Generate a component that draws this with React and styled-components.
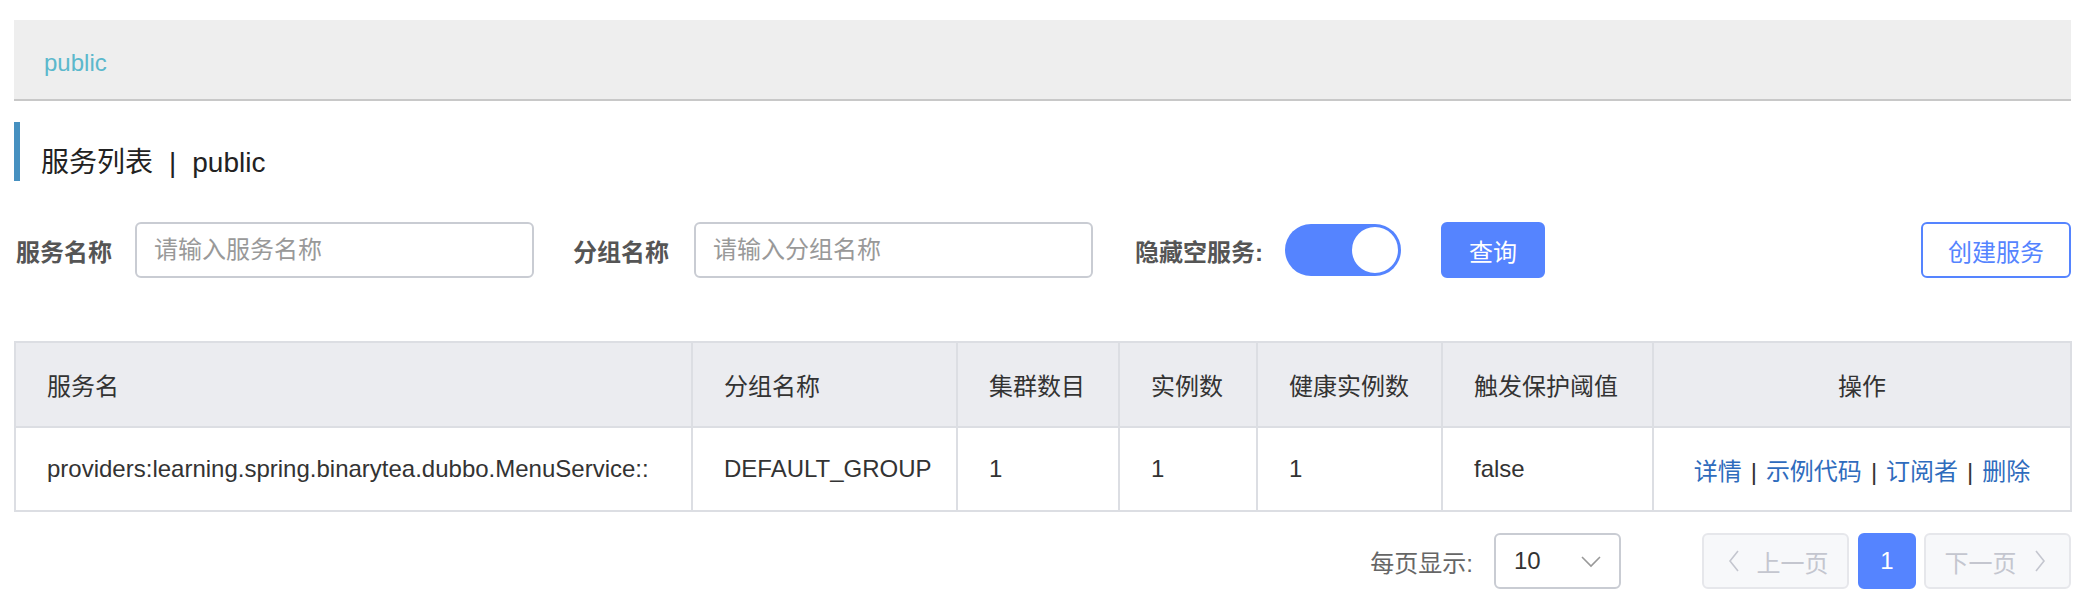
import React from 'react';
import styled, { createGlobalStyle } from 'styled-components';

const GlobalStyle = createGlobalStyle`
  body {
    margin: 0;
    background: #fff;
    font-family: "Liberation Sans", "Noto Sans CJK SC", sans-serif;
    color: #333;
  }
`;

const Page = styled.div`
  padding: 20px 15px 0 14px;
`;

const Crumb = styled.div`
  height: 81px;
  background: #eeeeee;
  border-bottom: 2px solid #c8c8c8;
  display: flex;
  align-items: center;
  padding: 6px 0 0 30px;
  box-sizing: border-box;
  font-size: 24px;
  color: #5bb8cc;
`;

const Title = styled.h3`
  margin: 21px 0 0;
  border-left: 6px solid #4690c0;
  padding: 27px 0 4px 21px;
  font-size: 28px;
  line-height: 28px;
  font-weight: normal;
  color: #222;
  display: flex;
`;

const Sep = styled.span`
  margin: 0 16px;
`;

const FilterRow = styled.div`
  margin-top: 41px;
  display: flex;
  align-items: center;
  height: 56px;
`;

const Label = styled.span`
  font-size: 24px;
  font-weight: bold;
  color: #555;
  margin: 0 ${p => p.gap || 23}px 0 ${p => p.left || 0}px;
  white-space: nowrap;
`;

const Input = styled.input`
  width: 399px;
  height: 56px;
  box-sizing: border-box;
  border: 2px solid #c9ccd3;
  border-radius: 6px;
  padding: 0 17px;
  font-size: 24px;
  font-family: inherit;
  color: #333;
  outline: none;
  &::placeholder {
    color: #999;
  }
`;

const Switch = styled.div`
  width: 116px;
  height: 52px;
  border-radius: 26px;
  background: #5584ff;
  box-sizing: border-box;
  display: flex;
  justify-content: flex-end;
  align-items: center;
  padding: 1px;
`;

const Knob = styled.div`
  width: 50px;
  height: 50px;
  border-radius: 50%;
  background: #fff;
  box-sizing: border-box;
  border: 2px solid #5584ff;
`;

const Button = styled.button`
  height: 56px;
  box-sizing: border-box;
  border-radius: 6px;
  font-size: 24px;
  font-family: inherit;
  padding: 0 ${p => p.pad || 26}px;
  border: 2px solid #5584ff;
  background: ${p => (p.primary ? '#5584ff' : '#fff')};
  color: ${p => (p.primary ? '#fff' : '#5584ff')};
  margin-left: ${p => p.left || 0}px;
  cursor: pointer;
`;

const Spacer = styled.div`
  flex: 1;
`;

const Table = styled.table`
  margin-top: 63px;
  width: 100%;
  border-collapse: collapse;
  table-layout: fixed;
  border: 2px solid #dcdee3;
`;

const Th = styled.th`
  height: 83px;
  background: #ebecf0;
  border: 2px solid #dcdee3;
  padding: 0 31px;
  text-align: ${p => p.align || 'left'};
  font-weight: normal;
  font-size: 24px;
  color: #333;
`;

const Td = styled.td`
  height: 82px;
  border: 2px solid #dcdee3;
  padding: 0 31px;
  text-align: ${p => p.align || 'left'};
  font-size: 24px;
  color: #333;
  white-space: nowrap;
`;

const Link = styled.a`
  color: #2f6cbd;
  text-decoration: none;
`;

const Bar = styled.span`
  margin: 0 9px;
  color: #333;
`;

const Pager = styled.div`
  margin-top: 21px;
  display: flex;
  justify-content: flex-end;
  align-items: center;
`;

const PageLabel = styled.span`
  font-size: 24px;
  color: #666;
  margin-right: 21px;
`;

const Select = styled.div`
  width: 127px;
  height: 56px;
  box-sizing: border-box;
  border: 2px solid #c9ccd3;
  border-radius: 6px;
  display: flex;
  align-items: center;
  justify-content: space-between;
  padding: 0 16px 0 18px;
  font-size: 24px;
  color: #333;
  margin-right: 81px;
`;

const PageBtn = styled.div`
  height: 56px;
  box-sizing: border-box;
  width: ${p => p.w}px;
  margin-left: ${p => p.left || 0}px;
  border-radius: 6px;
  border: 2px solid ${p => (p.active ? '#5584ff' : '#e6e7eb')};
  background: ${p => (p.active ? '#5584ff' : '#f7f8fa')};
  color: ${p => (p.active ? '#fff' : '#c4c6cf')};
  font-size: 24px;
  display: flex;
  align-items: center;
  justify-content: center;
  gap: 10px;
`;

const Chevron = ({ dir, color = '#c4c6cf', size = 24 }) => {
  const d = {
    left: 'M15 2 L7 12 L15 22',
    right: 'M9 2 L17 12 L9 22',
    down: 'M3 8 L12 17 L21 8',
  }[dir];
  return (
    <svg width={size} height={size} viewBox="0 0 24 24" fill="none">
      <path d={d} stroke={color} strokeWidth="1.6" />
    </svg>
  );
};

const columns = [
  { name: '服务名', w: 677 },
  { name: '分组名称', w: 265 },
  { name: '集群数目', w: 162 },
  { name: '实例数', w: 138 },
  { name: '健康实例数', w: 185 },
  { name: '触发保护阈值', w: 211 },
  { name: '操作', w: 418, align: 'center' },
];

const row = [
  'providers:learning.spring.binarytea.dubbo.MenuService::',
  'DEFAULT_GROUP',
  '1',
  '1',
  '1',
  'false',
];

const actions = ['详情', '示例代码', '订阅者', '删除'];

const App = () => {
  return (
    <Page>
      <GlobalStyle />
      <Crumb>public</Crumb>
      <Title>
        <span>服务列表</span>
        <Sep>|</Sep>
        <span>public</span>
      </Title>
      <FilterRow>
        <Label left={2}>服务名称</Label>
        <Input placeholder="请输入服务名称" />
        <Label left={39} gap={25}>分组名称</Label>
        <Input placeholder="请输入分组名称" />
        <Label left={42} gap={22}>隐藏空服务:</Label>
        <Switch>
          <Knob />
        </Switch>
        <Button primary left={40} pad={26}>查询</Button>
        <Spacer />
        <Button pad={25}>创建服务</Button>
      </FilterRow>
      <Table>
        <colgroup>
          {columns.map(c => (
            <col key={c.name} style={{ width: c.w }} />
          ))}
        </colgroup>
        <thead>
          <tr>
            {columns.map(c => (
              <Th key={c.name} align={c.align}>{c.name}</Th>
            ))}
          </tr>
        </thead>
        <tbody>
          <tr>
            {row.map((v, i) => (
              <Td key={i}>{v}</Td>
            ))}
            <Td align="center">
              {actions.map((a, i) => (
                <React.Fragment key={a}>
                  {i > 0 && <Bar>|</Bar>}
                  <Link href="#">{a}</Link>
                </React.Fragment>
              ))}
            </Td>
          </tr>
        </tbody>
      </Table>
      <Pager>
        <PageLabel>每页显示:</PageLabel>
        <Select>
          <span>10</span>
          <Chevron dir="down" color="#999" />
        </Select>
        <PageBtn w={147}>
          <Chevron dir="left" />
          上一页
        </PageBtn>
        <PageBtn w={58} left={9} active>1</PageBtn>
        <PageBtn w={147} left={8}>
          下一页
          <Chevron dir="right" />
        </PageBtn>
      </Pager>
    </Page>
  );
};

export default App;
